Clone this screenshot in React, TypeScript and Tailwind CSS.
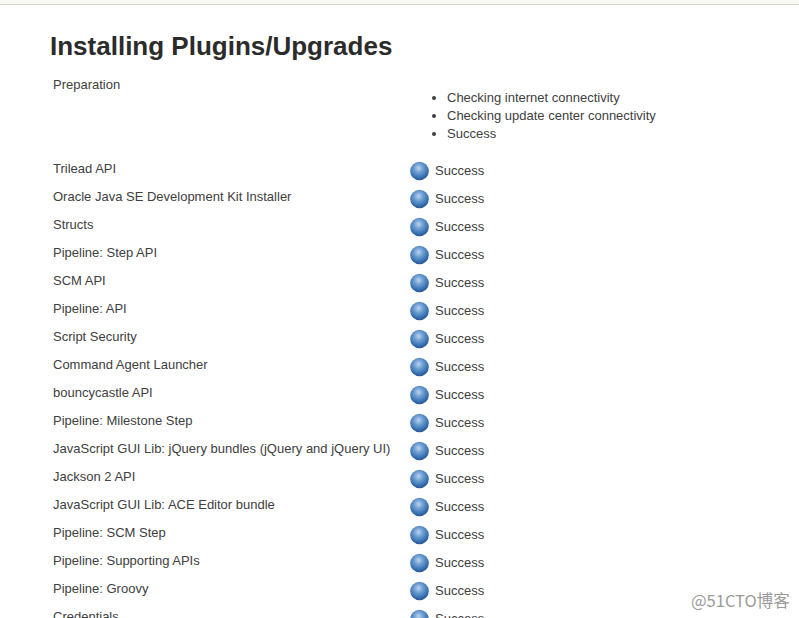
import React from "react";

const rows = [
  "Trilead API",
  "Oracle Java SE Development Kit Installer",
  "Structs",
  "Pipeline: Step API",
  "SCM API",
  "Pipeline: API",
  "Script Security",
  "Command Agent Launcher",
  "bouncycastle API",
  "Pipeline: Milestone Step",
  "JavaScript GUI Lib: jQuery bundles (jQuery and jQuery UI)",
  "Jackson 2 API",
  "JavaScript GUI Lib: ACE Editor bundle",
  "Pipeline: SCM Step",
  "Pipeline: Supporting APIs",
  "Pipeline: Groovy",
  "Credentials",
];

function Ball({ id }: { id: number }) {
  return (
    <svg width="20" height="20" viewBox="0 0 20 20" className="mt-[8px] shrink-0">
      <defs>
        <radialGradient id={`b${id}`} cx="45%" cy="35%" r="68%">
          <stop offset="0%" stopColor="#bcd3ec" />
          <stop offset="35%" stopColor="#6f9fd2" />
          <stop offset="72%" stopColor="#3b73b4" />
          <stop offset="100%" stopColor="#264f88" />
        </radialGradient>
      </defs>
      <circle cx="9.5" cy="10" r="9.3" fill={`url(#b${id})`} />
    </svg>
  );
}

export default function App() {
  return (
    <div className="relative h-[618px] w-[799px] overflow-hidden bg-white font-['Liberation_Sans',Arial,sans-serif] text-[13px] leading-[18px] text-[#404040]">
      <div className="h-[5px] border-b border-[#d8d8cc] bg-[#f8f8f4]" />
      <div className="pl-[50px] pt-[26px]">
        <h1 className="text-[26px] font-bold leading-[30px] text-[#2b2b2b]">Installing Plugins/Upgrades</h1>
        <div className="mt-[8px] flex h-[84px] pl-[3px]">
          <div className="w-[354px] pt-[7px]">Preparation</div>
          <ul className="list-disc pl-[40px] pt-[20px]">
            <li>Checking internet connectivity</li>
            <li>Checking update center connectivity</li>
            <li>Success</li>
          </ul>
        </div>
        <div className="flex flex-col pl-[3px]">
          {rows.map((r, i) => (
            <div key={r} className="flex h-[28px]">
              <div className="w-[357px] pt-[7px] whitespace-nowrap">{r}</div>
              <div className="flex gap-[5px]">
                <Ball id={i} />
                <span className="pt-[9px]">Success</span>
              </div>
            </div>
          ))}
        </div>
      </div>
      <div className="absolute left-[691px] top-[591px] font-['Noto_Sans_CJK_SC','Liberation_Sans',sans-serif] text-[16.5px] leading-[18px] text-[#9a9a9a]">
        @51CTO博客
      </div>
    </div>
  );
}
